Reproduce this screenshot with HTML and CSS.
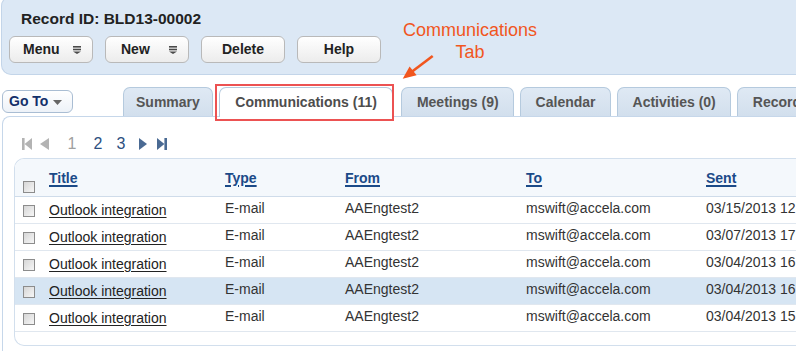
FILE: index.html
```html
<!DOCTYPE html>
<html lang="en">
<head>
<meta charset="utf-8">
<title>Record BLD13-00002 - Communications</title>
<link rel="stylesheet" href="styles.css">
</head>
<body>
<div class="page">
  <header class="record-bar">
    <h1 class="record-id">Record ID: BLD13-00002</h1>
    <div class="actions">
      <button class="btn btn-drop">Menu <svg class="drop-icon" width="8" height="8" viewBox="0 0 8 8"><rect x="0" y="0" width="8" height="1.6"/><rect x="0" y="2.7" width="8" height="1.6"/><polygon points="0,5.4 8,5.4 4,8"/></svg></button>
      <button class="btn btn-drop">New <svg class="drop-icon" width="8" height="8" viewBox="0 0 8 8"><rect x="0" y="0" width="8" height="1.6"/><rect x="0" y="2.7" width="8" height="1.6"/><polygon points="0,5.4 8,5.4 4,8"/></svg></button>
      <button class="btn">Delete</button>
      <button class="btn">Help</button>
    </div>
  </header>

  <div class="tabbar">
    <button class="goto">Go To <svg class="caret" width="9" height="5" viewBox="0 0 9 5"><polygon points="0,0 9,0 4.5,5"/></svg></button>
    <nav class="tabs">
      <a class="tab tab-summary">Summary</a>
      <a class="tab active">Communications (11)</a>
      <a class="tab">Meetings (9)</a>
      <a class="tab">Calendar</a>
      <a class="tab">Activities (0)</a>
      <a class="tab">Record Contacts</a>
    </nav>
  </div>

  <section class="panel">
    <div class="pager">
      <svg class="pg pg-first off" width="10" height="12" viewBox="0 0 10 12"><rect x="0" y="0" width="2.6" height="12"/><polygon points="10,0 2.6,6 10,12"/></svg>
      <svg class="pg pg-prev off" width="9" height="12" viewBox="0 0 9 12"><polygon points="9,0 0,6 9,12"/></svg>
      <span class="num current">1</span>
      <span class="num n2">2</span>
      <span class="num n3">3</span>
      <svg class="pg pg-next" width="8" height="12" viewBox="0 0 8 12"><polygon points="0,0 8,6 0,12"/></svg>
      <svg class="pg pg-last" width="10" height="12" viewBox="0 0 10 12"><polygon points="0,0 7.4,6 0,12"/><rect x="7.4" y="0" width="2.6" height="12"/></svg>
    </div>

    <div class="grid">
      <div class="row head">
        <div class="cell chk"><span class="box"></span></div>
        <div class="cell"><a class="sort">Title</a></div>
        <div class="cell"><a class="sort">Type</a></div>
        <div class="cell"><a class="sort">From</a></div>
        <div class="cell"><a class="sort">To</a></div>
        <div class="cell"><a class="sort">Sent</a></div>
      </div>
      <div class="row">
        <div class="cell chk"><span class="box"></span></div>
        <div class="cell title"><a class="link">Outlook integration</a></div>
        <div class="cell">E-mail</div>
        <div class="cell">AAEngtest2</div>
        <div class="cell">mswift@accela.com</div>
        <div class="cell">03/15/2013 12:41 PM</div>
      </div>
      <div class="row">
        <div class="cell chk"><span class="box"></span></div>
        <div class="cell title"><a class="link">Outlook integration</a></div>
        <div class="cell">E-mail</div>
        <div class="cell">AAEngtest2</div>
        <div class="cell">mswift@accela.com</div>
        <div class="cell">03/07/2013 17:12 PM</div>
      </div>
      <div class="row">
        <div class="cell chk"><span class="box"></span></div>
        <div class="cell title"><a class="link">Outlook integration</a></div>
        <div class="cell">E-mail</div>
        <div class="cell">AAEngtest2</div>
        <div class="cell">mswift@accela.com</div>
        <div class="cell">03/04/2013 16:35 PM</div>
      </div>
      <div class="row selected">
        <div class="cell chk"><span class="box"></span></div>
        <div class="cell title"><a class="link">Outlook integration</a></div>
        <div class="cell">E-mail</div>
        <div class="cell">AAEngtest2</div>
        <div class="cell">mswift@accela.com</div>
        <div class="cell">03/04/2013 16:20 PM</div>
      </div>
      <div class="row">
        <div class="cell chk"><span class="box"></span></div>
        <div class="cell title"><a class="link">Outlook integration</a></div>
        <div class="cell">E-mail</div>
        <div class="cell">AAEngtest2</div>
        <div class="cell">mswift@accela.com</div>
        <div class="cell">03/04/2013 15:58 PM</div>
      </div>
      <div class="grid-foot"></div>
    </div>
  </section>

  <div class="callout">Communications<br>Tab</div>
  <svg class="callout-arrow" width="40" height="32" viewBox="0 0 40 32"><line x1="34.7" y1="6" x2="14.5" y2="21.2" stroke="#f1561e" stroke-width="2.6"/><polygon points="4.7,28.7 18.6,25.2 11.6,16.5" fill="#f1561e"/></svg>
  <div class="highlight"></div>
</div>
</body>
</html>
```

FILE: styles.css
```css
* { box-sizing: border-box; }

html, body {
  margin: 0;
  padding: 0;
  background: #ffffff;
}

body {
  font-family: "Liberation Sans", Arial, sans-serif;
  color: #333333;
}

.page {
  position: relative;
  width: 796px;
  height: 351px;
  overflow: hidden;
}

/* ---------- record header ---------- */
.record-bar {
  margin-top: -4px;
  margin-left: 1px;
  width: 840px;
  height: 79px;
  padding: 13px 0 0 19px;
  background: #dce8f5;
  border: 1px solid #c3d5e9;
  border-right: none;
  border-radius: 10px 0 0 10px;
}

.record-id {
  margin: 0;
  font-size: 15.5px;
  line-height: 18px;
  font-weight: bold;
  color: #222222;
}

.actions {
  display: flex;
  gap: 12px;
  margin: 8px 0 0 -12px;
}

.btn {
  display: flex;
  align-items: center;
  justify-content: center;
  flex-shrink: 0;
  width: 84px;
  height: 27px;
  padding: 0 0 2px;
  font-family: "Liberation Sans", Arial, sans-serif;
  font-size: 14px;
  font-weight: bold;
  color: #222222;
  background: linear-gradient(#ffffff, #ececec);
  border: 1px solid #b9b9b9;
  border-radius: 6px;
}

.btn-drop {
  justify-content: space-between;
  padding: 0 11px 2px 13px;
}

.btn-drop:nth-child(2) {
  padding-left: 15px;
}

.drop-icon {
  fill: #4a4a4a;
  margin-top: 2px;
}

/* ---------- tab bar ---------- */
.tabbar {
  display: flex;
  align-items: flex-end;
  margin-top: 12px;
}

.goto {
  display: flex;
  align-items: center;
  flex-shrink: 0;
  gap: 5px;
  width: 71px;
  height: 23px;
  margin: 0 0 3px 2px;
  padding: 0 0 1px 6px;
  font-family: "Liberation Sans", Arial, sans-serif;
  font-size: 14px;
  font-weight: bold;
  white-space: nowrap;
  color: #13306a;
  background: linear-gradient(#ffffff, #edf2f8);
  border: 1px solid #a9bdd3;
  border-radius: 6px;
}

.caret {
  fill: #666666;
  margin-top: 3px;
}

.tabs {
  display: flex;
  align-items: flex-end;
  flex-shrink: 0;
  gap: 6px;
  margin-left: 50px;
}

.tab {
  display: flex;
  align-items: flex-start;
  justify-content: center;
  flex-shrink: 0;
  height: 29px;
  padding: 6px 14.5px 0;
  font-size: 14px;
  line-height: 16px;
  font-weight: bold;
  color: #555555;
  white-space: nowrap;
  background: linear-gradient(#dfe9f4, #d2dfed);
  border: 1px solid #b5cade;
  border-bottom: none;
  border-radius: 7px 7px 0 0;
}

.tab.tab-summary {
  padding-left: 12px;
  padding-right: 12px;
}

.tab.active {
  position: relative;
  z-index: 1;
  height: 30px;
  margin: 0 2px -1px 0;
  padding-left: 15.5px;
  padding-right: 15.5px;
  background: #ffffff;
  color: #4d4d4d;
}

/* ---------- content panel ---------- */
.panel {
  margin-left: 2px;
  width: 840px;
  height: 260px;
  padding: 17px 0 0 11px;
  border: 1px solid #c6d7ea;
  border-right: none;
  border-radius: 8px 0 0 0;
}

.pager {
  display: flex;
  align-items: center;
  height: 20px;
  padding-left: 8px;
}

.pg { fill: #4a6a93; }
.pg.off { fill: #b3b3b3; }
.pg-prev { margin-left: 8px; }
.pg-next { margin-left: 11px; }
.pg-last { margin-left: 10px; }

.num {
  width: 14px;
  text-align: center;
  font-size: 16px;
  line-height: 20px;
  color: #2c4f7f;
}

.num.current { margin-left: 16px; color: #a0a0a0; }
.num.n2 { margin-left: 12px; }
.num.n3 { margin-left: 9px; }

/* ---------- grid ---------- */
.grid {
  margin-top: 4px;
  width: 840px;
  border: 1px solid #d2dfed;
  border-right: none;
  border-radius: 10px 0 0 10px;
  overflow: hidden;
}

.row {
  display: grid;
  grid-template-columns: 34px 176px 120px 181px 180px 149px;
  height: 27px;
  border-bottom: 1px solid #e0e7ef;
  font-size: 14px;
  line-height: 16px;
  color: #333333;
}

.row .cell {
  padding-top: 3px;
  white-space: nowrap;
}

.row .cell.title { padding-top: 5px; }

.row .cell.chk {
  padding: 8px 0 0 8px;
}

.row.head {
  height: 38px;
  background: #f4f8fc;
  border-bottom: 1px solid #cfdcea;
}

.row.head .cell { padding-top: 11px; }
.row.head .cell.chk { padding-top: 22px; }

.row.selected { background: #d6e5f3; }

.box {
  display: block;
  width: 12px;
  height: 12px;
  border: 1px solid #8c8c8c;
  background: linear-gradient(135deg, #d6d6d6, #f6f6f6);
}

.sort {
  font-weight: bold;
  color: #1b4a88;
  text-decoration: underline;
  text-decoration-thickness: 2px;
  text-underline-offset: 2px;
}

.link {
  color: #222222;
  text-decoration: underline;
  text-underline-offset: 2px;
}

.grid-foot {
  height: 13px;
}

/* ---------- annotation overlay ---------- */
.callout {
  position: absolute;
  left: 392px;
  top: 19px;
  width: 156px;
  text-align: center;
  font-size: 18px;
  line-height: 22px;
  color: #f1561e;
}

.callout-arrow {
  position: absolute;
  left: 398px;
  top: 50px;
}

.highlight {
  position: absolute;
  z-index: 2;
  left: 215px;
  top: 84px;
  width: 179px;
  height: 37px;
  border: 2px solid #ec5252;
}
```
